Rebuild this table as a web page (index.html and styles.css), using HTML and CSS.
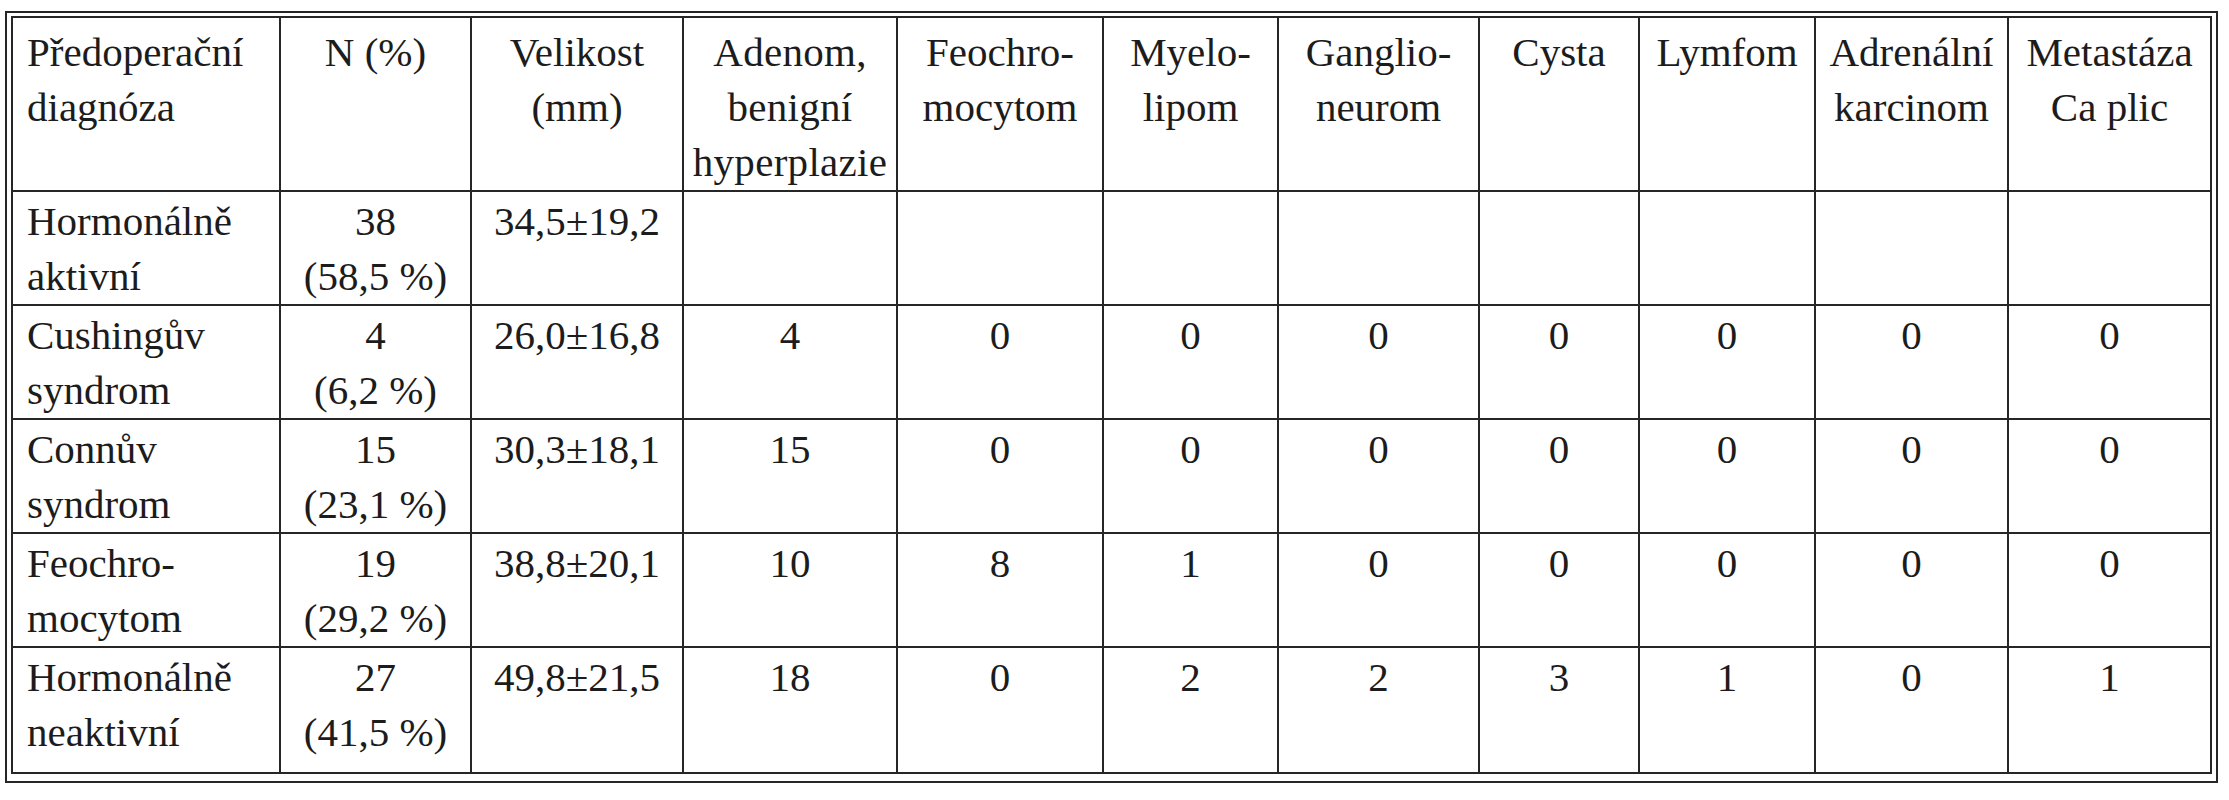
FILE: index.html
```html
<!DOCTYPE html>
<html lang="cs">
<head>
<meta charset="utf-8">
<title>Předoperační diagnóza</title>
<link rel="stylesheet" href="styles.css">
</head>
<body>
<div class="frame">
<table class="grid">
<colgroup>
<col class="c1"><col class="c2"><col class="c3"><col class="c4"><col class="c5"><col class="c6"><col class="c7"><col class="c8"><col class="c9"><col class="c10"><col class="c11">
</colgroup>
<thead>
<tr class="head">
<th class="first">Předoperační<br>diagnóza</th>
<th>N (%)</th>
<th>Velikost<br>(mm)</th>
<th class="spaced">Adenom,<br>benigní<br>hyperplazie</th>
<th>Feochro-<br>mocytom</th>
<th>Myelo-<br>lipom</th>
<th>Ganglio-<br>neurom</th>
<th>Cysta</th>
<th>Lymfom</th>
<th>Adrenální<br>karcinom</th>
<th>Metastáza<br>Ca plic</th>
</tr>
</thead>
<tbody>
<tr>
<td class="first">Hormonálně<br>aktivní</td>
<td>38<br>(58,5 %)</td>
<td>34,5±19,2</td>
<td></td><td></td><td></td><td></td><td></td><td></td><td></td><td></td>
</tr>
<tr>
<td class="first">Cushingův<br>syndrom</td>
<td>4<br>(6,2 %)</td>
<td>26,0±16,8</td>
<td>4</td><td>0</td><td>0</td><td>0</td><td>0</td><td>0</td><td>0</td><td>0</td>
</tr>
<tr>
<td class="first">Connův<br>syndrom</td>
<td>15<br>(23,1 %)</td>
<td>30,3±18,1</td>
<td>15</td><td>0</td><td>0</td><td>0</td><td>0</td><td>0</td><td>0</td><td>0</td>
</tr>
<tr>
<td class="first">Feochro-<br>mocytom</td>
<td>19<br>(29,2 %)</td>
<td>38,8±20,1</td>
<td>10</td><td>8</td><td>1</td><td>0</td><td>0</td><td>0</td><td>0</td><td>0</td>
</tr>
<tr class="last">
<td class="first">Hormonálně<br>neaktivní</td>
<td>27<br>(41,5 %)</td>
<td>49,8±21,5</td>
<td>18</td><td>0</td><td>2</td><td>2</td><td>3</td><td>1</td><td>0</td><td>1</td>
</tr>
</tbody>
</table>
</div>
</body>
</html>
```

FILE: styles.css
```css
html, body {
  margin: 0;
  padding: 0;
  background: #ffffff;
}

body {
  font-family: "Liberation Serif", "Times New Roman", serif;
  font-size: 41px;
  line-height: 55px;
  color: #1c1c1c;
}

.frame {
  box-sizing: border-box;
  width: 2213px;
  margin: 11px 0 0 5px;
  border: 2px solid #262626;
  padding: 3px 3px 7px 4px;
}

.grid {
  box-sizing: border-box;
  width: 2201px;
  table-layout: fixed;
  border-collapse: separate;
  border-spacing: 0;
  border-left: 2px solid #262626;
  border-top: 2px solid #262626;
}

.c1 { width: 268px; }
.c2 { width: 191px; }
.c3 { width: 212px; }
.c4 { width: 214px; }
.c5 { width: 206px; }
.c6 { width: 175px; }
.c7 { width: 201px; }
.c8 { width: 160px; }
.c9 { width: 176px; }
.c10 { width: 193px; }
.c11 { width: 203px; }

.grid th,
.grid td {
  box-sizing: border-box;
  border-right: 2px solid #262626;
  border-bottom: 2px solid #262626;
  padding: 2px 0 0 0;
  text-align: center;
  vertical-align: top;
  font-weight: normal;
  white-space: nowrap;
  overflow: hidden;
}

.grid .head th {
  padding-top: 7px;
}

.grid .first,
.grid .head .first {
  text-align: left;
  padding-left: 14px;
}

.grid .last td {
  padding-bottom: 12px;
}

.spaced {
  letter-spacing: 0.3px;
}
```
